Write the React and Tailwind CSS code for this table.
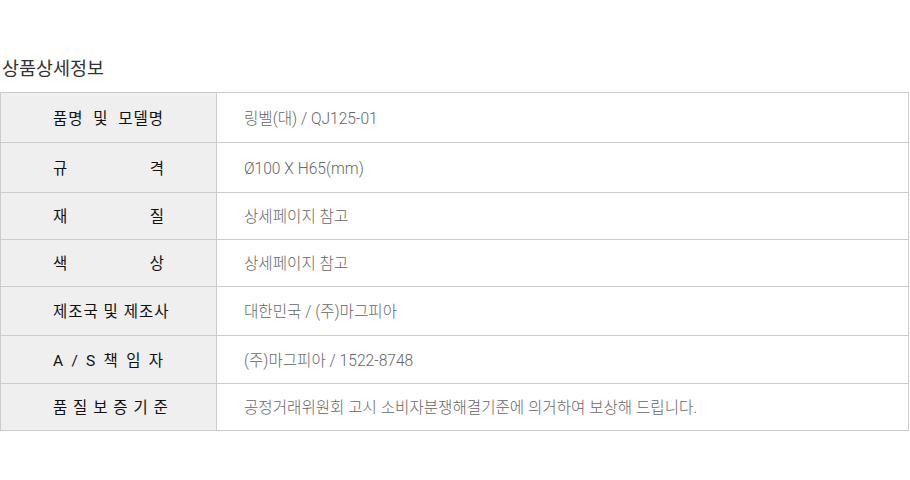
import React from "react";

const rows = [
  { h: "h-[50px]", label: ["품명 및 모델명"], value: "링벨(대) / QJ125-01" },
  { h: "h-[50px]", label: ["규", "격"], value: "Ø100 X H65(mm)" },
  { h: "h-[47px]", label: ["재", "질"], value: "상세페이지 참고" },
  { h: "h-[47px]", label: ["색", "상"], value: "상세페이지 참고" },
  { h: "h-[49px]", label: ["제조국 및 제조사"], value: "대한민국 / (주)마그피아" },
  { h: "h-[48px]", label: ["A / S 책 임 자"], value: "(주)마그피아 / 1522-8748" },
  { h: "h-[47px]", label: ["품 질 보 증 기 준"], value: "공정거래위원회 고시 소비자분쟁해결기준에 의거하여 보상해 드립니다." },
];

export default function App() {
  return (
    <div
      className="w-[910px] h-[480px] bg-white"
      style={{ fontFamily: 'Roboto, "Noto Sans CJK KR", sans-serif' }}
    >
      <div className="pt-[56px] pl-[2px] text-[18.5px] leading-[26px] text-[#333]">상품상세정보</div>
      <table className="mt-[10px] w-[909px] border-collapse">
        <tbody>
          {rows.map((r, i) => (
            <tr key={i} className={r.h}>
              <td className="w-[216px] p-0 pt-[4px] border border-[#cccccc] bg-[#efefef] text-[15.5px] font-normal text-[#111]">
                {r.label.length === 1 ? (
                  <div className="mx-auto w-[111px] whitespace-nowrap tracking-[1px] [text-align-last:justify] text-justify">
                    {r.label[0]}
                  </div>
                ) : (
                  <div className="mx-auto w-[111px] flex justify-between">
                    <span>{r.label[0]}</span>
                    <span>{r.label[1]}</span>
                  </div>
                )}
              </td>
              <td className="p-0 pt-[4px] pl-[27px] border border-[#cccccc] text-[15.6px] font-light text-[#666]">{r.value}</td>
            </tr>
          ))}
        </tbody>
      </table>
    </div>
  );
}
